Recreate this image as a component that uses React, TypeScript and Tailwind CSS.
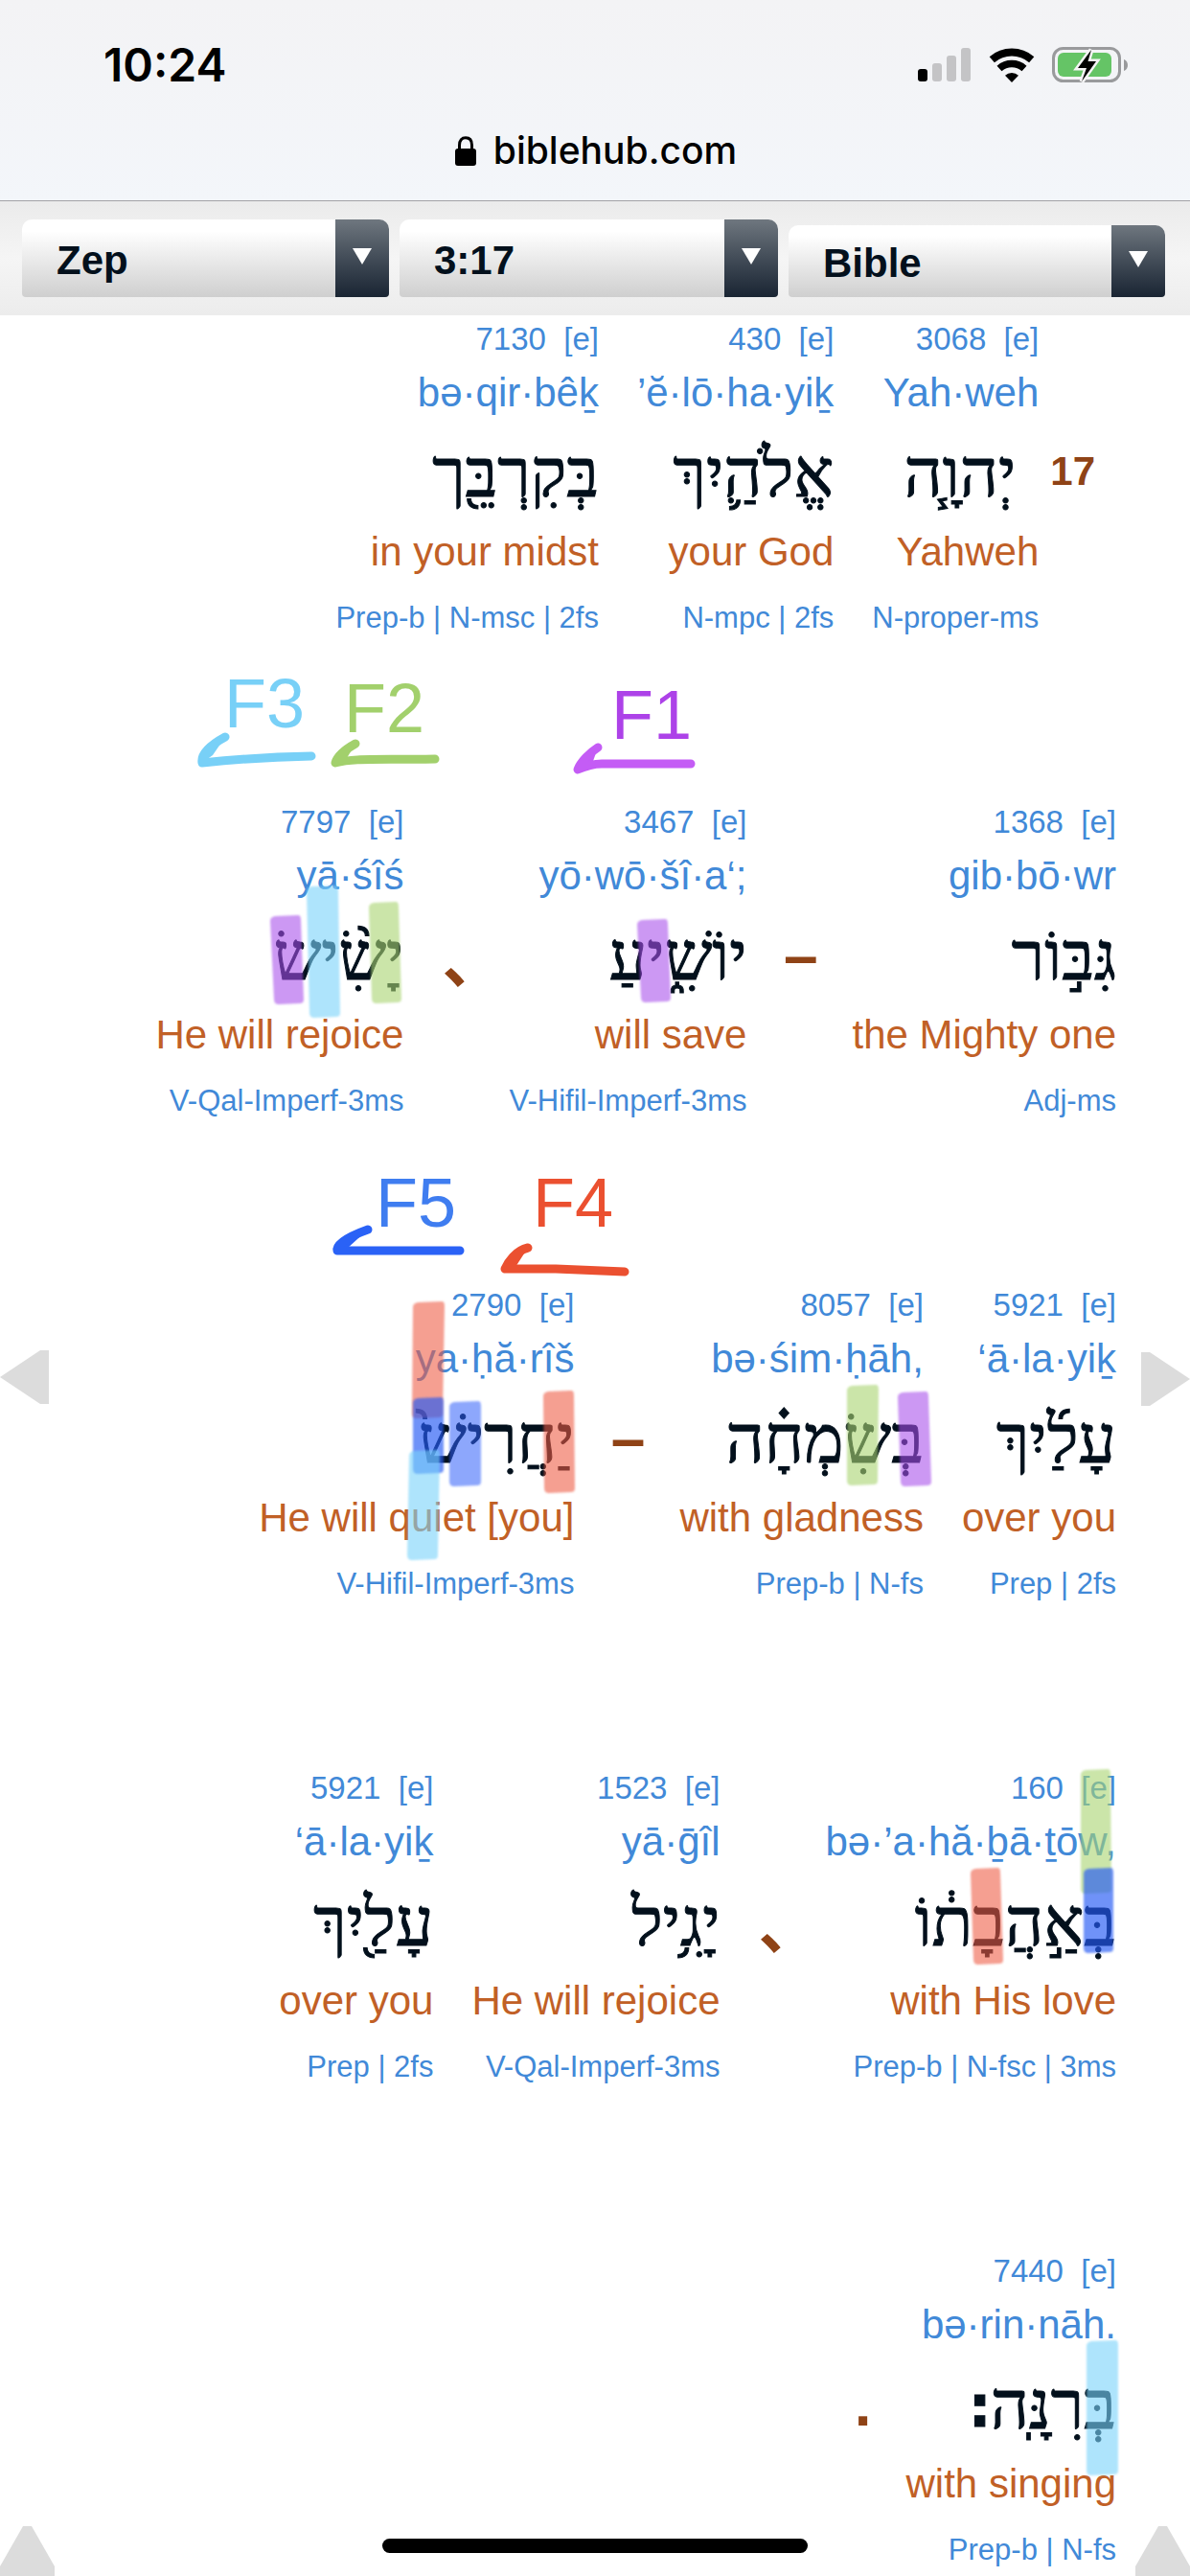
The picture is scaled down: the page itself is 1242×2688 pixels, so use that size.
import { useId, type ReactNode } from "react";

type Word = { n: string; t: string; h: string; g: string; p: string; indent?: boolean; end?: string };
type Item = Word | { mark: string; kind: "verse" | "dash" | "comma" | "stop" };

const verse: Item[][] = [
  [
    { mark: "17", kind: "verse" },
    { n: "3068", t: "Yah·weh", h: "יְהוָ֧ה", g: "Yahweh", p: "N-proper-ms", indent: true },
    { n: "430", t: "’ĕ·lō·ha·yiḵ", h: "אֱלֹהַ֛יִךְ", g: "your God", p: "N-mpc | 2fs" },
    { n: "7130", t: "bə·qir·bêḵ", h: "בְּקִרְבֵּ֖ך", g: "in your midst", p: "Prep-b | N-msc | 2fs" },
  ],
  [
    { n: "1368", t: "gib·bō·wr", h: "גִּבּ֣וֹר", g: "the Mighty one", p: "Adj-ms" },
    { mark: "–", kind: "dash" },
    { n: "3467", t: "yō·wō·šî·a‘;", h: "יוֹשִׁ֑יעַ", g: "will save", p: "V-Hifil-Imperf-3ms" },
    { mark: "、", kind: "comma" },
    { n: "7797", t: "yā·śîś", h: "יָשִׂ֨ישׂ", g: "He will rejoice", p: "V-Qal-Imperf-3ms" },
  ],
  [
    { n: "5921", t: "‘ā·la·yiḵ", h: "עָלַ֜יִךְ", g: "over you", p: "Prep | 2fs" },
    { n: "8057", t: "bə·śim·ḥāh,", h: "בְּשִׂמְחָ֗ה", g: "with gladness", p: "Prep-b | N-fs" },
    { mark: "–", kind: "dash" },
    { n: "2790", t: "ya·ḥă·rîš", h: "יַחֲרִישׁ֙", g: "He will quiet [you]", p: "V-Hifil-Imperf-3ms" },
  ],
  [
    { n: "160", t: "bə·’a·hă·ḇā·ṯōw,", h: "בְּאַ֣הֲבָת֔וֹ", g: "with His love", p: "Prep-b | N-fsc | 3ms" },
    { mark: "、", kind: "comma" },
    { n: "1523", t: "yā·ḡîl", h: "יָגִ֥יל", g: "He will rejoice", p: "V-Qal-Imperf-3ms" },
    { n: "5921", t: "‘ā·la·yiḵ", h: "עָלַ֖יִךְ", g: "over you", p: "Prep | 2fs" },
  ],
  [
    { n: "7440", t: "bə·rin·nāh.", h: "בְּרִנָּֽה", g: "with singing", p: "Prep-b | N-fs", end: "׃" },
    { mark: ".", kind: "stop" },
  ],
];

function WordBlock({ word }: { word: Word }) {
  return (
    <div className="ml-10 flex flex-col items-start whitespace-nowrap text-[#4189d8]">
      <a href="#strongs" dir="ltr" className="text-[33px] leading-[50px]">
        {word.n}&nbsp; [e]
      </a>
      <a href="#translit" dir="ltr" className="text-[42px] leading-[62px]">
        {word.t}
      </a>
      <span
        lang="he"
        className={
          "flex text-[70px] leading-[108px] text-[#03101c] [-webkit-text-stroke:1px_#03101c] font-['Liberation_Serif','DejaVu_Sans',serif] " +
          (word.indent ? "ps-6" : "")
        }
      >
        {word.h}
        {word.end && <span className="font-['DejaVu_Sans',sans-serif] font-bold text-[60px]">{word.end}</span>}
      </span>
      <span dir="ltr" className="text-[42px] leading-[54px] text-[#c16026]">
        {word.g}
      </span>
      <a href="#parse" dir="ltr" className="text-[31px] leading-[84px]">
        {word.p}
      </a>
    </div>
  );
}

function Mark({ mark, kind }: { mark: string; kind: string }) {
  if (kind === "verse") {
    return (
      <span className="ml-3 mr-[22px] pt-[139px] text-[42px] leading-[48px] font-bold text-[#8f4316]">{mark}</span>
    );
  }
  return (
    <span
      className={
        "ml-10 -mr-1 flex w-[34px] pt-32 text-[64px] leading-[72px] font-bold text-[#8f4316] " +
        (kind === "comma" ? "justify-end font-['Noto_Sans_CJK_JP',sans-serif]" : "justify-start")
      }
    >
      {mark}
    </span>
  );
}

type Quad = [x1: number, x2: number, top: number, x3: number, x4: number, bottom: number, fill: string];

const PURPLE = "rgb(167 75 235 / 0.58)";
const SKY = "rgb(120 210 250 / 0.6)";
const GREEN = "rgb(168 212 112 / 0.6)";
const RED = "rgb(237 90 68 / 0.58)";
const BLUE = "rgb(50 95 250 / 0.55)";
const DEEP = "rgb(40 90 245 / 0.66)";

const highlights: Quad[] = [
  [282, 314, 626, 286, 317, 719, PURPLE],
  [320, 353, 595, 323, 355, 733, SKY],
  [385, 416, 612, 388, 419, 718, GREEN],
  [665, 697, 630, 669, 700, 717, PURPLE],
  [431, 464, 1029, 430, 462, 1151, RED],
  [431, 463, 1129, 431, 463, 1209, DEEP],
  [427, 459, 1184, 425, 457, 1299, SKY],
  [469, 502, 1133, 469, 502, 1222, BLUE],
  [567, 599, 1122, 568, 600, 1229, RED],
  [884, 917, 1116, 884, 916, 1221, GREEN],
  [937, 969, 1123, 940, 972, 1222, PURPLE],
  [1128, 1159, 1517, 1128, 1160, 1647, GREEN],
  [1131, 1162, 1620, 1131, 1162, 1709, DEEP],
  [1013, 1044, 1620, 1016, 1047, 1721, RED],
  [1134, 1167, 2113, 1134, 1167, 2254, SKY],
];

const strokes = [
  { d: "M235 440 C224 446 209 456 211 467 C240 464 270 461 325 460", fill: "M235 440 C224 446 209 456 211 467 L222 459 Z", c: "#78d0f7" },
  { d: "M371 447 C362 452 352 460 350 467 C370 462 390 464 454 463", fill: "M371 447 C362 452 352 460 350 467 L362 462 Z", c: "#a2d06c" },
  { d: "M624 451 C616 456 606 466 603 474 C612 470 618 468 628 468 L721 468", fill: "M624 451 C616 456 606 466 603 474 L618 468 Z", c: "#c45cf5" },
  { d: "M384 954 C370 959 350 968 352 976 L480 976", fill: "M384 954 C370 959 350 968 352 976 L362 974 Z", c: "#2a62f6" },
  { d: "M551 973 C538 976 530 988 527 995 L580 995 L652 998", fill: "M551 973 C538 976 530 988 527 995 L538 993 Z", c: "#eb5030" },
];

const labels = [
  { text: "F3", cls: "right-[924px] top-[365px] text-[#78d0f7]" },
  { text: "F2", cls: "right-[799px] top-[370px] text-[#a2d06c]" },
  { text: "F1", cls: "right-[520px] top-[377px] text-[#ad42e8]" },
  { text: "F5", cls: "right-[766px] top-[886px] text-[#3f7df0]" },
  { text: "F4", cls: "right-[602px] top-[886px] text-[#eb5030]" },
];

function Ink() {
  const soft = useId();
  return (
    <div className="pointer-events-none absolute right-0 top-0">
      <svg width="1242" height="2359" viewBox="0 0 1242 2359" aria-hidden="true">
        <filter id={soft}>
          <feGaussianBlur stdDeviation="0.8" />
        </filter>
        {highlights.map(([x1, x2, t, x3, x4, b, fill], i) => (
          <path
            key={i}
            filter={`url(#${soft})`}
            fill={fill}
            d={`M${x1} ${t + 6} Q${x1} ${t + 2} ${x1 + 5} ${t + 1} L${x2 - 3} ${t} Q${x2} ${t} ${x2} ${t + 5} L${x4} ${b - 5} Q${x4} ${b - 1} ${x4 - 4} ${b - 1} L${x3 + 5} ${b} Q${x3} ${b} ${x3} ${b - 5} Z`}
          />
        ))}
        {strokes.map((s) => (
          <g key={s.d}>
            <path d={s.fill} fill={s.c} />
            <path d={s.d} stroke={s.c} strokeWidth="9" strokeLinecap="round" strokeLinejoin="round" fill="none" />
          </g>
        ))}
      </svg>
      {labels.map((l) => (
        <span key={l.text} className={"absolute text-[72px] leading-[80px] " + l.cls}>
          {l.text}
        </span>
      ))}
    </div>
  );
}

function Picker({ label, value, className }: { label: string; value: string; className: string }) {
  return (
    <label
      className={
        "relative flex overflow-hidden rounded-t-[10px] rounded-b-[4px] bg-linear-to-b from-white from-15% to-[#cfcfcf] " +
        className
      }
    >
      <select
        aria-label={label}
        defaultValue={value}
        className="min-w-0 flex-1 appearance-none bg-transparent pt-[3px] pl-9 text-[42px] font-bold text-[#03101c] outline-none"
      >
        <option>{value}</option>
      </select>
      <span className="pointer-events-none flex w-14 items-center justify-center bg-linear-to-b from-[#6f777f] to-[#1a2533] pb-1">
        <svg width="20" height="17" viewBox="0 0 20 17" aria-hidden="true">
          <path d="M0 0H20L10 17Z" fill="#fff" />
        </svg>
      </span>
    </label>
  );
}

function StatusBar() {
  return (
    <div className="flex items-center justify-between pl-[108px] pr-[64px] pt-[38px] font-['Inter',sans-serif]">
      <span className="text-[48px] leading-[60px] font-semibold text-black">10:24</span>
      <div className="flex items-center gap-[18px]">
        <svg width="56" height="36" viewBox="0 0 56 36" aria-label="Signal">
          <rect x="0" y="22" width="10" height="13" rx="3" fill="#000" />
          <rect x="15" y="16" width="10" height="19" rx="3" fill="#c4c4c6" />
          <rect x="30" y="8" width="10" height="27" rx="3" fill="#c4c4c6" />
          <rect x="45" y="0" width="10" height="35" rx="3" fill="#c4c4c6" />
        </svg>
        <svg width="48" height="36" viewBox="0 0 48 36" aria-label="Wi-Fi">
          <path d="M3.300 12.300A31.700 31.700 0 0 1 44.700 12.300" fill="none" stroke="#000" strokeWidth="8" />
          <path d="M11 21.500A19.500 19.500 0 0 1 37 21.500" fill="none" stroke="#000" strokeWidth="7.500" />
          <path d="M24 36 17 28.700A10.500 10.500 0 0 1 31 28.700Z" />
        </svg>
        <svg width="80" height="38" viewBox="0 0 80 38" aria-label="Battery charging">
          <rect x="1.500" y="1.500" width="69" height="34" rx="10" fill="none" stroke="#999a9c" strokeWidth="3" />
          <path d="M75 13v12c3-1 4-3.500 4-6s-1-5-4-6Z" fill="#999a9c" />
          <rect x="6" y="6" width="56" height="25" rx="6" fill="#65c466" />
          <path d="M41 3 27 22H36L31 36 46 15H37.500Z" fill="#000" stroke="#f4f4f5" strokeWidth="5" paintOrder="stroke" />
        </svg>
      </div>
    </div>
  );
}

function Flipper({ className, children, label }: { className: string; children: ReactNode; label: string }) {
  return (
    <a href="#flip" aria-label={label} className={"absolute text-[#dcdcdc] " + className}>
      {children}
    </a>
  );
}

export default function App() {
  return (
    <main className="relative h-screen overflow-hidden bg-white font-['Liberation_Sans',Arial,sans-serif]">
      <header>
        <div className="flex h-[210px] flex-col border-b border-[#a3a3a6] bg-linear-to-b from-[#f3f3f5] to-[#f3f6fa]">
          <StatusBar />
          <div className="flex flex-1 items-center justify-center gap-[18px] pt-2 pl-[2px] font-['Inter',sans-serif] text-[39px] font-medium text-black">
            <svg width="22" height="32" viewBox="0 0 22 32" aria-hidden="true">
              <path d="M4.500 15V9.500C4.500 4.500 7 1.800 11 1.800s6.500 2.700 6.500 7.700V15" fill="none" stroke="#000" strokeWidth="3" />
              <rect x="0" y="13" width="22" height="18" rx="3" />
            </svg>
            <span>biblehub.com</span>
          </div>
        </div>
        <nav className="flex h-[119px] items-end gap-[11px] bg-linear-to-b from-[#ebebeb] via-[#f5f5f5] to-[#ececec] pb-[19px] pl-[23px] pr-[26px]">
          <Picker label="Book" value="Zep" className="h-[81px] flex-[383]" />
          <Picker label="Verse" value="3:17" className="h-[81px] flex-[395]" />
          <Picker label="Version" value="Bible" className="h-[75px] flex-[393]" />
        </nav>
      </header>
      <section className="relative">
        {verse.map((row, i) => (
          <div key={i} dir="rtl" className="flex items-start pb-[146px] pr-[77px]">
            {row.map((item, j) =>
              "mark" in item ? <Mark key={j} mark={item.mark} kind={item.kind} /> : <WordBlock key={j} word={item} />
            )}
          </div>
        ))}
        <Ink />
      </section>
      <Flipper label="Previous" className="left-0 top-[1408px]">
        <svg width="51" height="58" viewBox="0 0 51 58">
          <path d="M0 29 42 1H51V57H42Z" fill="currentColor" />
        </svg>
      </Flipper>
      <Flipper label="Next" className="right-0 top-[1410px]">
        <svg width="51" height="58" viewBox="0 0 51 58">
          <path d="M51 29 9 1H0V57H9Z" fill="currentColor" />
        </svg>
      </Flipper>
      <Flipper label="Top" className="bottom-0 left-0">
        <svg width="57" height="52" viewBox="0 0 57 52">
          <path d="M24 0H33L57 42V52H0V42Z" fill="currentColor" />
        </svg>
      </Flipper>
      <Flipper label="Top of page" className="bottom-0 right-0">
        <svg width="57" height="52" viewBox="0 0 57 52">
          <path d="M24 0H33L57 42V52H0V42Z" fill="currentColor" />
        </svg>
      </Flipper>
      <div className="absolute bottom-6 left-1/2 h-[15px] w-[444px] -translate-x-1/2 rounded-full bg-black" />
    </main>
  );
}
